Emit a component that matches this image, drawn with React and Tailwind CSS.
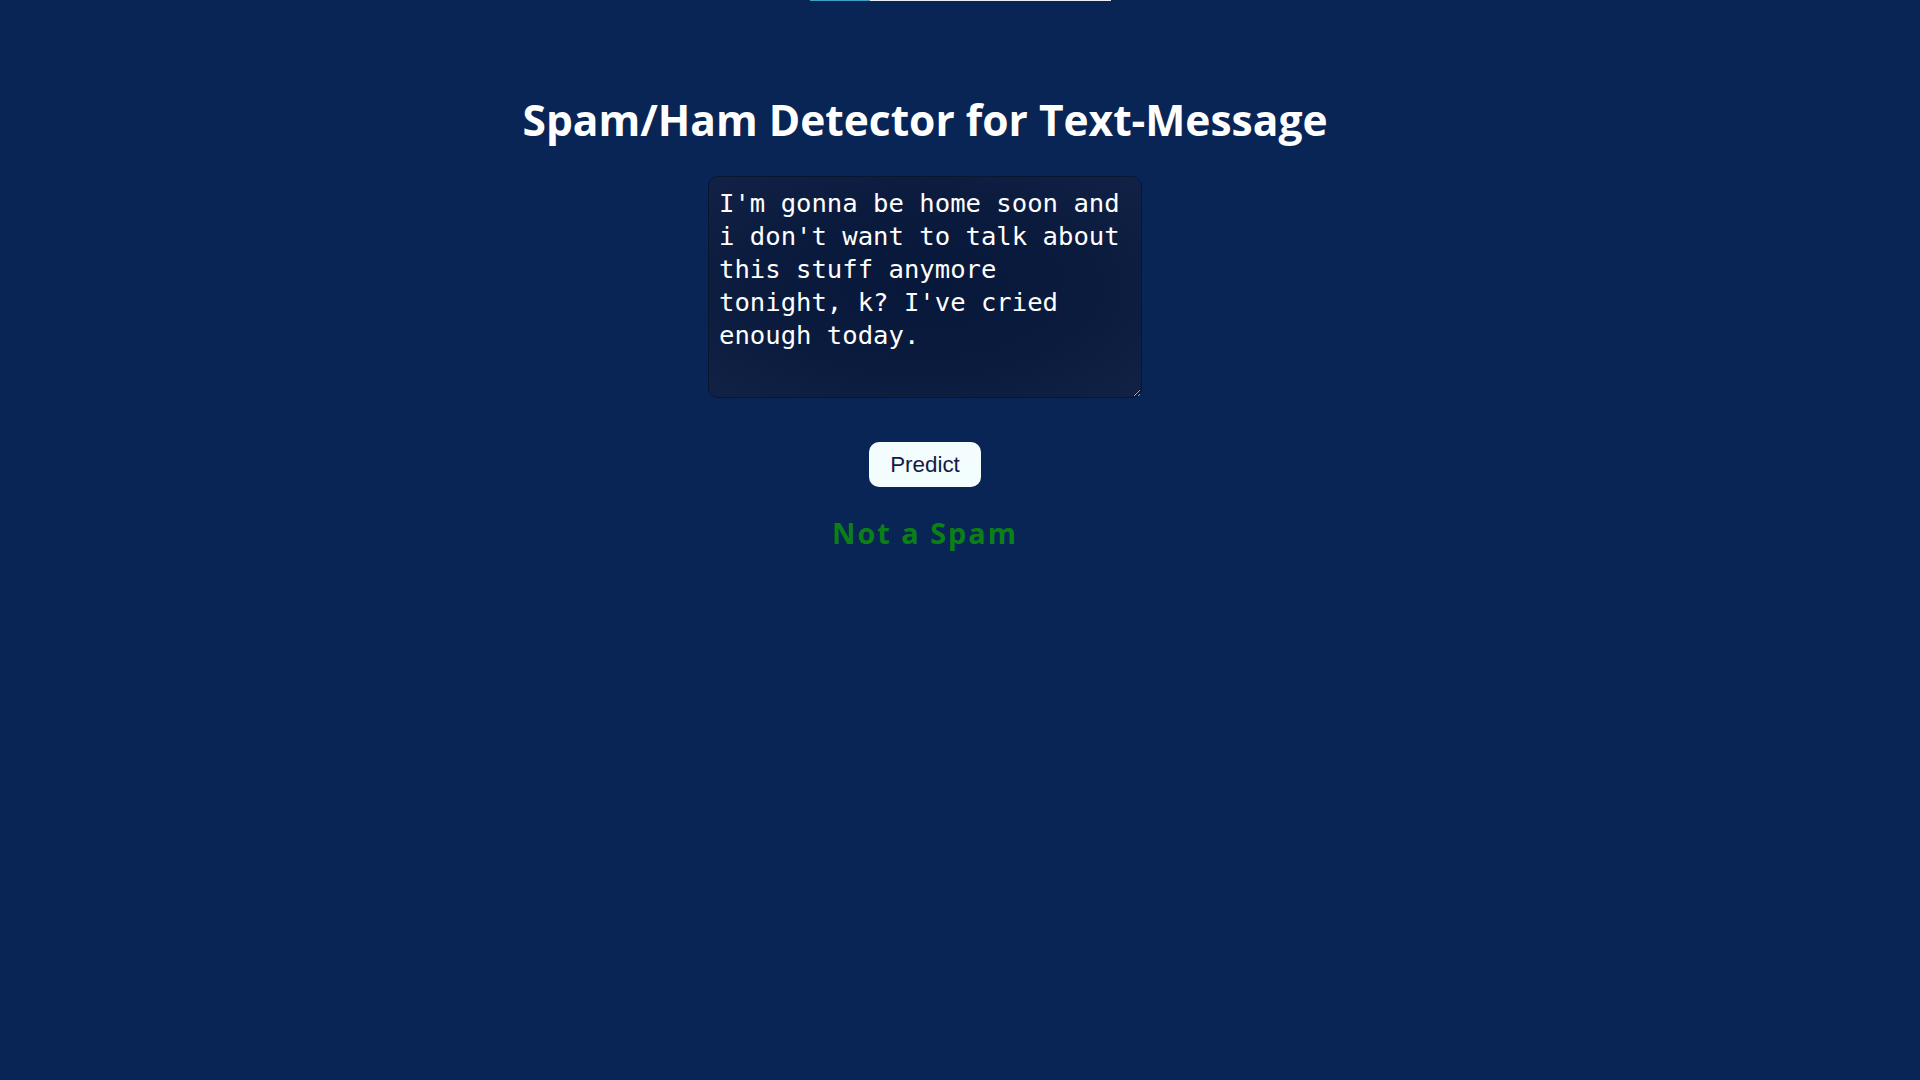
import React, { useState } from 'react';

export default function App() {
  const [message, setMessage] = useState(
    "I'm gonna be home soon and i don't want to talk about this stuff anymore tonight, k? I've cried enough today."
  );

  return (
    <div className="min-h-screen w-full bg-[#092555] font-['Open_Sans',sans-serif]">
      {/* thin loader line at the very top */}
      <div className="flex justify-center">
        <div className="flex w-[301px] h-px">
          <div className="w-[60px] bg-[#3f9fc8]"></div>
          <div className="flex-1 bg-[#e8eef6]"></div>
        </div>
      </div>

      <div className="flex flex-col items-center pr-[70px]">
        <h1 className="mt-[91px] text-[42.5px] leading-[56px] font-bold text-white">
          Spam/Ham Detector for Text-Message
        </h1>

        <textarea
          value={message}
          onChange={(e) => setMessage(e.target.value)}
          className="mt-[28px] w-[434px] h-[222px] rounded-[10px] border border-[#0a1530] bg-[radial-gradient(ellipse_at_center,#08183a_0%,#0b1b3e_55%,#112246_100%)] px-[10px] pt-[10px] pb-[8px] text-[25.6px] leading-[33px] text-white font-['DejaVu_Sans_Mono',monospace] focus:outline-none"
        />

        <button className="mt-[44px] h-[45px] w-[112px] rounded-[10px] bg-[#f3fdfd] text-[22.4px] text-[#121a45] font-['Liberation_Sans',Arial,sans-serif]">
          Predict
        </button>

        <p className="mt-[24px] text-[28.8px] font-bold tracking-[2px] text-[#0b8016]">
          Not a Spam
        </p>
      </div>
    </div>
  );
}
